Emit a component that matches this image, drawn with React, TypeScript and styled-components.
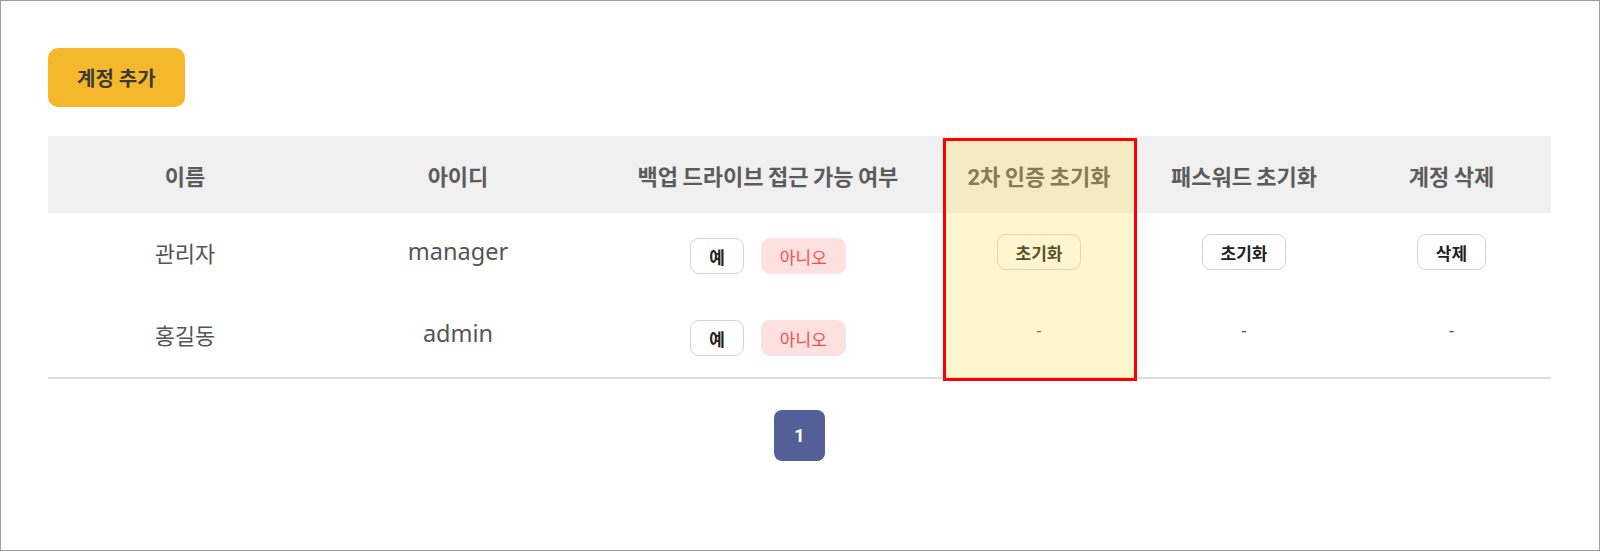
import React, { FC } from "react";
import styled, { createGlobalStyle } from "styled-components";

type Account = {
  name: string;
  id: string;
  owner: boolean;
};

const accounts: Account[] = [
  { name: "관리자", id: "manager", owner: true },
  { name: "홍길동", id: "admin", owner: false },
];

const columns = ["이름", "아이디", "백업 드라이브 접근 가능 여부", "2차 인증 초기화", "패스워드 초기화", "계정 삭제"];

const GlobalStyle = createGlobalStyle`
  body {
    margin: 0;
    background: #fff;
    font-family: Roboto, "Noto Sans CJK KR", sans-serif;
  }
  * {
    box-sizing: border-box;
  }
`;

const App: FC = () => {
  return (
    <Frame>
      <GlobalStyle />
      <AddButton>계정 추가</AddButton>

      <TableWrap>
        <HeadRow>
          {columns.map((c) => (
            <HeadCell key={c}>{c}</HeadCell>
          ))}
        </HeadRow>

        <Body>
          {accounts.map((a) => (
            <Row key={a.id}>
              <Cell>{a.name}</Cell>
              <Cell $latin>{a.id}</Cell>
              <Cell>
                <Choice>
                  <Chip>예</Chip>
                  <Chip $danger>아니오</Chip>
                </Choice>
              </Cell>
              <Cell>{a.owner ? <Chip>초기화</Chip> : <Dash>-</Dash>}</Cell>
              <Cell>{a.owner ? <Chip>초기화</Chip> : <Dash>-</Dash>}</Cell>
              <Cell>{a.owner ? <Chip>삭제</Chip> : <Dash>-</Dash>}</Cell>
            </Row>
          ))}
        </Body>

        {/* annotation box over the 2FA column */}
        <Highlight />
      </TableWrap>

      <Pager>
        <PageButton>1</PageButton>
      </Pager>
    </Frame>
  );
};

const Frame = styled.div`
  width: 100%;
  height: 551px;
  border: 1px solid #9e9e9e;
  padding: 47px 48px 0 47px;
  display: flex;
  flex-direction: column;
  align-items: flex-start;
`;

const AddButton = styled.button`
  height: 59px;
  padding: 0 29px;
  border: none;
  border-radius: 10px;
  background: #f6b82b;
  color: #3a3a3a;
  font-family: Roboto, "Noto Sans CJK KR", sans-serif;
  font-size: 20px;
  font-weight: 700;
  cursor: pointer;
`;

const TableWrap = styled.div`
  position: relative;
  width: 100%;
  margin-top: 29px;
`;

const grid = `
  display: grid;
  grid-template-columns: 274px 272px 348px 194px 216px 199px;
`;

const HeadRow = styled.div`
  ${grid}
  height: 77px;
  background: #f0f0f0;
`;

const HeadCell = styled.div`
  display: flex;
  align-items: center;
  justify-content: center;
  font-size: 22px;
  font-weight: 700;
  word-spacing: -1px;
  color: #5c5c5c;
`;

const Body = styled.div`
  border-bottom: 2px solid #ddd;
`;

const Row = styled.div`
  ${grid}
  height: 82px;
`;

const Cell = styled.div<{ $latin?: boolean }>`
  display: flex;
  align-items: center;
  justify-content: center;
  font-family: ${(p) => (p.$latin ? `"Noto Sans", "Noto Sans CJK KR", sans-serif` : `Roboto, "Noto Sans CJK KR", sans-serif`)};
  font-size: ${(p) => (p.$latin ? "23.5px" : "22px")};
  color: #555;
  padding-bottom: ${(p) => (p.$latin ? "6px" : "4px")};
`;

const Choice = styled.div`
  display: flex;
  gap: 17px;
  padding-top: 8px;
`;

const Chip = styled.button<{ $danger?: boolean }>`
  height: 36px;
  min-width: 52px;
  padding: 0 18px;
  border-radius: 9px;
  border: 1px solid ${(p) => (p.$danger ? "#fde1e1" : "#cfd5dd")};
  background: ${(p) => (p.$danger ? "#fde1e1" : "#fff")};
  color: ${(p) => (p.$danger ? "#f34d4d" : "#222")};
  font-family: Roboto, "Noto Sans CJK KR", sans-serif;
  font-size: 17px;
  font-weight: ${(p) => (p.$danger ? 400 : 700)};
  cursor: pointer;
`;

const Dash = styled.span`
  color: #555;
  font-size: 18px;
  padding-bottom: 8px;
`;

const Highlight = styled.div`
  position: absolute;
  left: 895px;
  top: 2px;
  width: 194px;
  height: 243px;
  border: 3px solid #ff0000;
  background: rgba(255, 221, 64, 0.25);
  pointer-events: none;
`;

const Pager = styled.div`
  width: 100%;
  display: flex;
  justify-content: center;
  margin-top: 31px;
`;

const PageButton = styled.button`
  width: 51px;
  height: 51px;
  border: none;
  border-radius: 8px;
  background: #535f97;
  color: #fff;
  font-family: Roboto, "Noto Sans CJK KR", sans-serif;
  font-size: 18px;
  font-weight: 700;
`;

export default App;
